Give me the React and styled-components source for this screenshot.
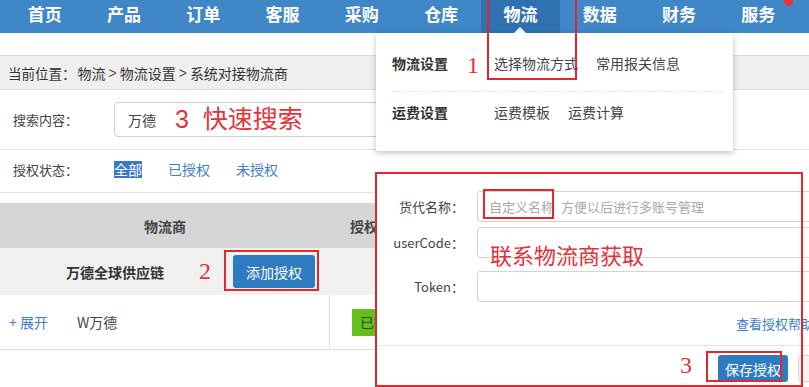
import React from 'react';
import styled, { createGlobalStyle } from 'styled-components';

const Global = createGlobalStyle`
  html, body { margin: 0; padding: 0; background: #fff; }
  body {
    width: 809px; height: 387px; overflow: hidden;
    font-family: "Noto Sans CJK SC", "Liberation Sans", sans-serif;
    font-size: 13px; color: #333;
  }
`;

const Page = styled.div`
  position: relative;
  width: 809px;
  height: 387px;
  overflow: hidden;
`;

const Nav = styled.nav`
  display: flex;
  height: 33px;
  padding-left: 5px;
  background: #3f87c7;
`;

const NavItem = styled.div`
  position: relative;
  flex: 0 0 79.3px;
  display: flex;
  align-items: center;
  justify-content: center;
  box-sizing: border-box;
  padding-bottom: 5px;
  color: #fff;
  font-size: 17px;
  font-weight: bold;
  line-height: 24px;
  background: ${p => (p.$active ? '#2e72b1' : 'transparent')};
  &::after {
    content: '';
    display: ${p => (p.$active ? 'block' : 'none')};
    position: absolute;
    left: 50%;
    bottom: 0;
    margin-left: -6px;
    border: 6px solid transparent;
    border-bottom-color: #fff;
    border-top-width: 0;
  }
`;

const NotifyDot = styled.span`
  position: absolute;
  left: 784px;
  top: -3px;
  width: 9px;
  height: 9px;
  border-radius: 50%;
  background: #e8353b;
`;

const Spacer = styled.div`
  height: 22px;
`;

const Breadcrumb = styled.div`
  height: 33px;
  display: flex;
  align-items: center;
  padding-left: 8px;
  background: #efefef;
  border-top: 1px solid #dcdcdc;
  border-bottom: 1px solid #dcdcdc;
  font-size: 14px;
  color: #333;
`;

const CrumbLead = styled.span`
  font-size: 13.5px;
`;

const CrumbTrail = styled.span`
  display: flex;
  align-items: center;
  margin-left: 2px;
`;

const CrumbSep = styled.span`
  margin: 0 3px;
  font-family: "Liberation Sans", sans-serif;
  font-size: 14px;
  color: #555;
`;

const FilterRow = styled.div`
  height: ${p => p.$h}px;
  box-sizing: border-box;
  padding-bottom: ${p => p.$pb || 0}px;
  display: flex;
  align-items: center;
  padding-left: 13px;
  border-bottom: 1px solid #e2e2e2;
`;

const FilterLabel = styled.span`
  width: 101px;
  font-size: 13px;
  color: #444;
`;

const SearchInput = styled.div`
  width: 420px;
  height: 35px;
  box-sizing: border-box;
  display: flex;
  align-items: center;
  padding-left: 13px;
  border: 1px solid #cfcfcf;
  border-radius: 4px;
  font-size: 14px;
  color: #444;
`;

const StatusLinks = styled.div`
  display: flex;
  gap: 26px;
`;

const StatusLink = styled.span`
  font-size: 14px;
  line-height: 17px;
  color: ${p => (p.$selected ? '#fff' : '#3d7fc4')};
  background: ${p => (p.$selected ? '#3b78c6' : 'transparent')};
`;

const Gap = styled.div`
  height: 10px;
`;

const TableRow = styled.div`
  display: grid;
  grid-template-columns: 330px 1fr;
  height: ${p => p.$h}px;
  box-sizing: border-box;
  background: ${p => p.$bg};
  border-bottom: ${p => (p.$line ? '1px solid #dedede' : 'none')};
`;

const HeadCell = styled.div`
  display: flex;
  align-items: center;
  justify-content: ${p => (p.$center ? 'center' : 'flex-start')};
  padding-left: ${p => (p.$center ? 0 : 20)}px;
  font-size: 14px;
  font-weight: bold;
  color: #444;
`;

const GroupCell = styled.div`
  grid-column: 1 / -1;
  display: flex;
  align-items: center;
  padding-left: 66px;
`;

const GroupName = styled.span`
  font-size: 14px;
  font-weight: bold;
  color: #333;
`;

const PrimaryButton = styled.button`
  height: ${p => p.$h || 33}px;
  padding: 0 ${p => p.$px || 13}px;
  margin-left: ${p => p.$ml || 0}px;
  border: none;
  border-radius: 3px;
  background: #2f7bc2;
  color: #fff;
  font-family: inherit;
  font-size: 14px;
  line-height: 1;
`;

const DataCell = styled.div`
  display: flex;
  align-items: center;
  padding-left: ${p => p.$pl}px;
  border-right: ${p => (p.$divider ? '1px solid #dedede' : 'none')};
`;

const ToggleLink = styled.span`
  font-size: 14px;
  color: #3d80c6;
  margin-right: 29px;
`;

const CarrierCode = styled.span`
  font-size: 14px;
  color: #444;
`;

const Badge = styled.span`
  height: 27px;
  display: inline-flex;
  align-items: center;
  padding: 0 8px;
  background: #63c01a;
  color: #2d4a19;
  font-size: 14px;
`;

/* dropdown menu */
const Dropdown = styled.div`
  position: absolute;
  left: 376px;
  top: 33px;
  width: 357px;
  height: 118px;
  box-sizing: border-box;
  padding: 0 11px 0 16px;
  background: #fff;
  box-shadow: 0 2px 6px rgba(0, 0, 0, 0.25);
`;

const MenuRow = styled.div`
  display: flex;
  align-items: center;
  height: ${p => p.$h}px;
  padding-top: ${p => p.$pt || 0}px;
  box-sizing: border-box;
  border-bottom: ${p => (p.$dashed ? '1px dashed #e4e4e4' : 'none')};
`;

const MenuTitle = styled.span`
  width: 102px;
  font-size: 14px;
  font-weight: bold;
  color: #333;
`;

const MenuLinks = styled.div`
  display: flex;
  gap: 18px;
`;

const MenuLink = styled.span`
  font-size: 14px;
  color: #444;
`;

/* modal */
const Modal = styled.div`
  position: absolute;
  left: 376px;
  top: 172px;
  width: 520px;
  height: 260px;
  background: #fff;
  display: flex;
  flex-direction: column;
  padding-top: 19px;
  box-sizing: border-box;
`;

const FormRow = styled.div`
  display: flex;
  align-items: center;
  margin-top: ${p => p.$mt || 0}px;
`;

const FormLabel = styled.span`
  width: 88px;
  margin-right: 13px;
  text-align: right;
  font-size: 13px;
  color: #444;
`;

const TextBox = styled.div`
  flex: 1;
  height: 31px;
  box-sizing: border-box;
  display: flex;
  align-items: center;
  padding-left: 11px;
  border: 1px solid #d3d3d3;
  border-radius: 3px;
  font-size: 13px;
  color: #a9a9a9;
  white-space: nowrap;
`;

const HintRest = styled.span`
  margin-left: 7px;
`;

const HelpLink = styled.div`
  padding-left: 360px;
  margin-top: 13px;
  height: 18px;
  line-height: 18px;
  font-size: 13px;
  color: #3d80c6;
  white-space: nowrap;
`;

const ModalFooter = styled.div`
  margin-top: 12px;
  border-top: 1px solid #e6e6e6;
  padding: 9px 0 0 342px;
  display: flex;
  gap: 10px;
`;

const GhostButton = styled.button`
  width: 60px;
  height: 27px;
  border: 1px solid #d6d6d6;
  border-radius: 3px;
  background: #f4f4f4;
  color: #333;
  font-family: inherit;
  font-size: 14px;
`;

/* annotations */
const MarkBox = styled.div`
  position: absolute;
  left: ${p => p.$x}px;
  top: ${p => p.$y}px;
  width: ${p => p.$w}px;
  height: ${p => p.$h}px;
  box-sizing: border-box;
  border: 2px solid #e2282e;
  pointer-events: none;
`;

const MarkNum = styled.span`
  position: absolute;
  left: ${p => p.$x}px;
  top: ${p => p.$y}px;
  font-family: "Liberation Serif", serif;
  font-size: 24px;
  line-height: 24px;
  color: #e2333a;
`;

const MarkText = styled.span`
  position: absolute;
  left: ${p => p.$x}px;
  top: ${p => p.$y}px;
  font-family: ${p => (p.$serif ? '"Liberation Serif", "Noto Sans CJK SC", serif' : '"Liberation Sans", "Noto Sans CJK SC", sans-serif')};
  font-size: ${p => p.$size}px;
  line-height: 1;
  color: #e2333a;
  white-space: pre;
`;

const navItems = ['首页', '产品', '订单', '客服', '采购', '仓库', '物流', '数据', '财务', '服务'];
const crumbs = ['物流', '物流设置', '系统对接物流商'];

export default function App() {
  return (
    <>
      <Global />
      <Page>
        <Nav>
          {navItems.map(n => (
            <NavItem key={n} $active={n === '物流'}>{n}</NavItem>
          ))}
        </Nav>
        <NotifyDot />
        <Spacer />
        <Breadcrumb>
          <CrumbLead>当前位置：</CrumbLead>
          <CrumbTrail>
            {crumbs.map((c, i) => (
              <React.Fragment key={c}>
                {i > 0 && <CrumbSep>&gt;</CrumbSep>}
                <span>{c}</span>
              </React.Fragment>
            ))}
          </CrumbTrail>
        </Breadcrumb>
        <FilterRow $h={60}>
          <FilterLabel>搜索内容：</FilterLabel>
          <SearchInput>万德</SearchInput>
        </FilterRow>
        <FilterRow $h={43} $pb={4}>
          <FilterLabel>授权状态：</FilterLabel>
          <StatusLinks>
            <StatusLink $selected>全部</StatusLink>
            <StatusLink>已授权</StatusLink>
            <StatusLink>未授权</StatusLink>
          </StatusLinks>
        </FilterRow>
        <Gap />
        <TableRow $h={45} $bg="#d6d6d6">
          <HeadCell $center>物流商</HeadCell>
          <HeadCell>授权状态</HeadCell>
        </TableRow>
        <TableRow $h={47} $bg="#f0f0f0">
          <GroupCell>
            <GroupName>万德全球供应链</GroupName>
            <PrimaryButton $ml={69} $h={33} $px={13}>添加授权</PrimaryButton>
          </GroupCell>
        </TableRow>
        <TableRow $h={55} $bg="#fff" $line>
          <DataCell $pl={9} $divider>
            <ToggleLink>+ 展开</ToggleLink>
            <CarrierCode>W万德</CarrierCode>
          </DataCell>
          <DataCell $pl={22}>
            <Badge>已授权</Badge>
          </DataCell>
        </TableRow>

        <Dropdown>
          <MenuRow $h={59} $pt={1} $dashed>
            <MenuTitle>物流设置</MenuTitle>
            <MenuLinks>
              <MenuLink>选择物流方式</MenuLink>
              <MenuLink>常用报关信息</MenuLink>
            </MenuLinks>
          </MenuRow>
          <MenuRow $h={40}>
            <MenuTitle>运费设置</MenuTitle>
            <MenuLinks>
              <MenuLink>运费模板</MenuLink>
              <MenuLink>运费计算</MenuLink>
            </MenuLinks>
          </MenuRow>
        </Dropdown>

        <Modal>
          <FormRow>
            <FormLabel>货代名称：</FormLabel>
            <TextBox>自定义名称<HintRest>方便以后进行多账号管理</HintRest></TextBox>
          </FormRow>
          <FormRow $mt={5}>
            <FormLabel>userCode：</FormLabel>
            <TextBox />
          </FormRow>
          <FormRow $mt={13}>
            <FormLabel>Token：</FormLabel>
            <TextBox />
          </FormRow>
          <HelpLink>查看授权帮助文档</HelpLink>
          <ModalFooter>
            <PrimaryButton $h={27} $px={7}>保存授权</PrimaryButton>
            <GhostButton>取消</GhostButton>
          </ModalFooter>
        </Modal>

        <MarkText $x={175} $y={107} $size={25}>3  快速搜索</MarkText>
        <MarkText $x={490} $y={246} $size={22} $serif>联系物流商获取</MarkText>
        <MarkNum $x={467} $y={53}>1</MarkNum>
        <MarkNum $x={199} $y={259}>2</MarkNum>
        <MarkNum $x={680} $y={353}>3</MarkNum>
        <MarkBox $x={487} $y={-2} $w={90} $h={82} />
        <MarkBox $x={224} $y={250} $w={95} $h={41} />
        <MarkBox $x={483} $y={189} $w={71} $h={30} />
        <MarkBox $x={706} $y={351} $w={76} $h={31} />
        <MarkBox $x={375} $y={172} $w={428} $h={215} />
      </Page>
    </>
  );
}
